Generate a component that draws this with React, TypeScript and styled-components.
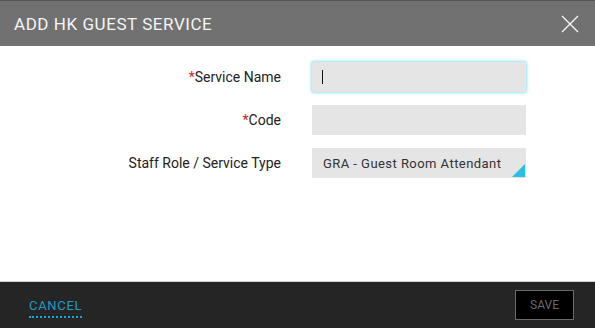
import * as React from 'react';
import styled, { createGlobalStyle } from 'styled-components';

const Global = createGlobalStyle`
    html, body {
        margin: 0;
        padding: 0;
        background: #ffffff;
    }
    * {
        box-sizing: border-box;
    }
`

const Dialog = styled.div`
    width: 595px;
    height: 328px;
    display: flex;
    flex-direction: column;
    font-family: 'Roboto', 'Liberation Sans', sans-serif;
`

const Header = styled.div`
    height: 46px;
    background: #717171;
    border-top: 1px solid #555555;
    display: flex;
    align-items: center;
    justify-content: space-between;
    padding: 0 15px 0 14px;
`

const Title = styled.h1`
    margin: 0;
    color: #f4f4f4;
    font-size: 17px;
    font-weight: 400;
    letter-spacing: 0.55px;
`

const Close = styled.button`
    width: 20px;
    height: 20px;
    padding: 0;
    border: none;
    background: transparent;
    cursor: pointer;
    display: flex;
    align-items: center;
    justify-content: center;
`

const Body = styled.div`
    flex: 1;
    background: #ffffff;
    padding-top: 16px;
    display: flex;
    flex-direction: column;
    gap: 13px;
`

const Row = styled.div`
    display: grid;
    grid-template-columns: 281px 214px;
    column-gap: 31px;
    align-items: center;
`

const Label = styled.label`
    text-align: right;
    font-size: 14px;
    color: #222222;
`

const Star = styled.span`
    color: #e01b1b;
`

const Field = styled.div<{ $focused?: boolean }>`
    position: relative;
    height: 30px;
    background: #e5e5e5;
    display: flex;
    align-items: center;
    padding-left: 11px;
    font-size: 13px;
    color: #333333;
    letter-spacing: 0.45px;
    box-shadow: ${p => (p.$focused ? '0 0 3px 1px #8fe3f5' : 'none')};
    border-radius: ${p => (p.$focused ? '2px' : '0')};
`

const Caret = styled.span`
    width: 1px;
    height: 14px;
    background: #111111;
    margin-left: -1px;
`

const Corner = styled.span`
    position: absolute;
    right: 1px;
    bottom: 1px;
    width: 0;
    height: 0;
    border-left: 13px solid transparent;
    border-bottom: 13px solid #29c0e6;
`

const Footer = styled.div`
    height: 47px;
    background: #252525;
    border-top: 1px solid #cfcfcf;
    display: flex;
    align-items: center;
    justify-content: space-between;
    padding: 0 21px 0 29px;
`

const Cancel = styled.button`
    padding: 0 0 3px;
    border: none;
    border-bottom: 2px dotted #17a8d6;
    background: transparent;
    color: #1a9cc6;
    font-family: inherit;
    font-size: 13px;
    letter-spacing: 0.7px;
    cursor: pointer;
    margin-top: 6px;
`

const Save = styled.button`
    width: 59px;
    height: 30px;
    border: 1px solid #6a6a6a;
    background: #000000;
    color: #6a6a6a;
    font-family: inherit;
    font-size: 12px;
    cursor: default;
`

export default function App() {
    return (
        <>
            <Global />
            <Dialog>
                <Header>
                    <Title>ADD HK GUEST SERVICE</Title>
                    <Close aria-label="close">
                        <svg width="18" height="18" viewBox="0 0 18 18">
                            <path d="M1 1 L17 17 M17 1 L1 17" stroke="#f4f4f4" strokeWidth="1.4" />
                        </svg>
                    </Close>
                </Header>
                <Body>
                    <Row>
                        <Label><Star>*</Star>Service Name</Label>
                        <Field $focused><Caret /></Field>
                    </Row>
                    <Row>
                        <Label><Star>*</Star>Code</Label>
                        <Field />
                    </Row>
                    <Row>
                        <Label>Staff Role / Service Type</Label>
                        <Field>
                            GRA - Guest Room Attendant
                            <Corner />
                        </Field>
                    </Row>
                </Body>
                <Footer>
                    <Cancel>CANCEL</Cancel>
                    <Save>SAVE</Save>
                </Footer>
            </Dialog>
        </>
    );
}
